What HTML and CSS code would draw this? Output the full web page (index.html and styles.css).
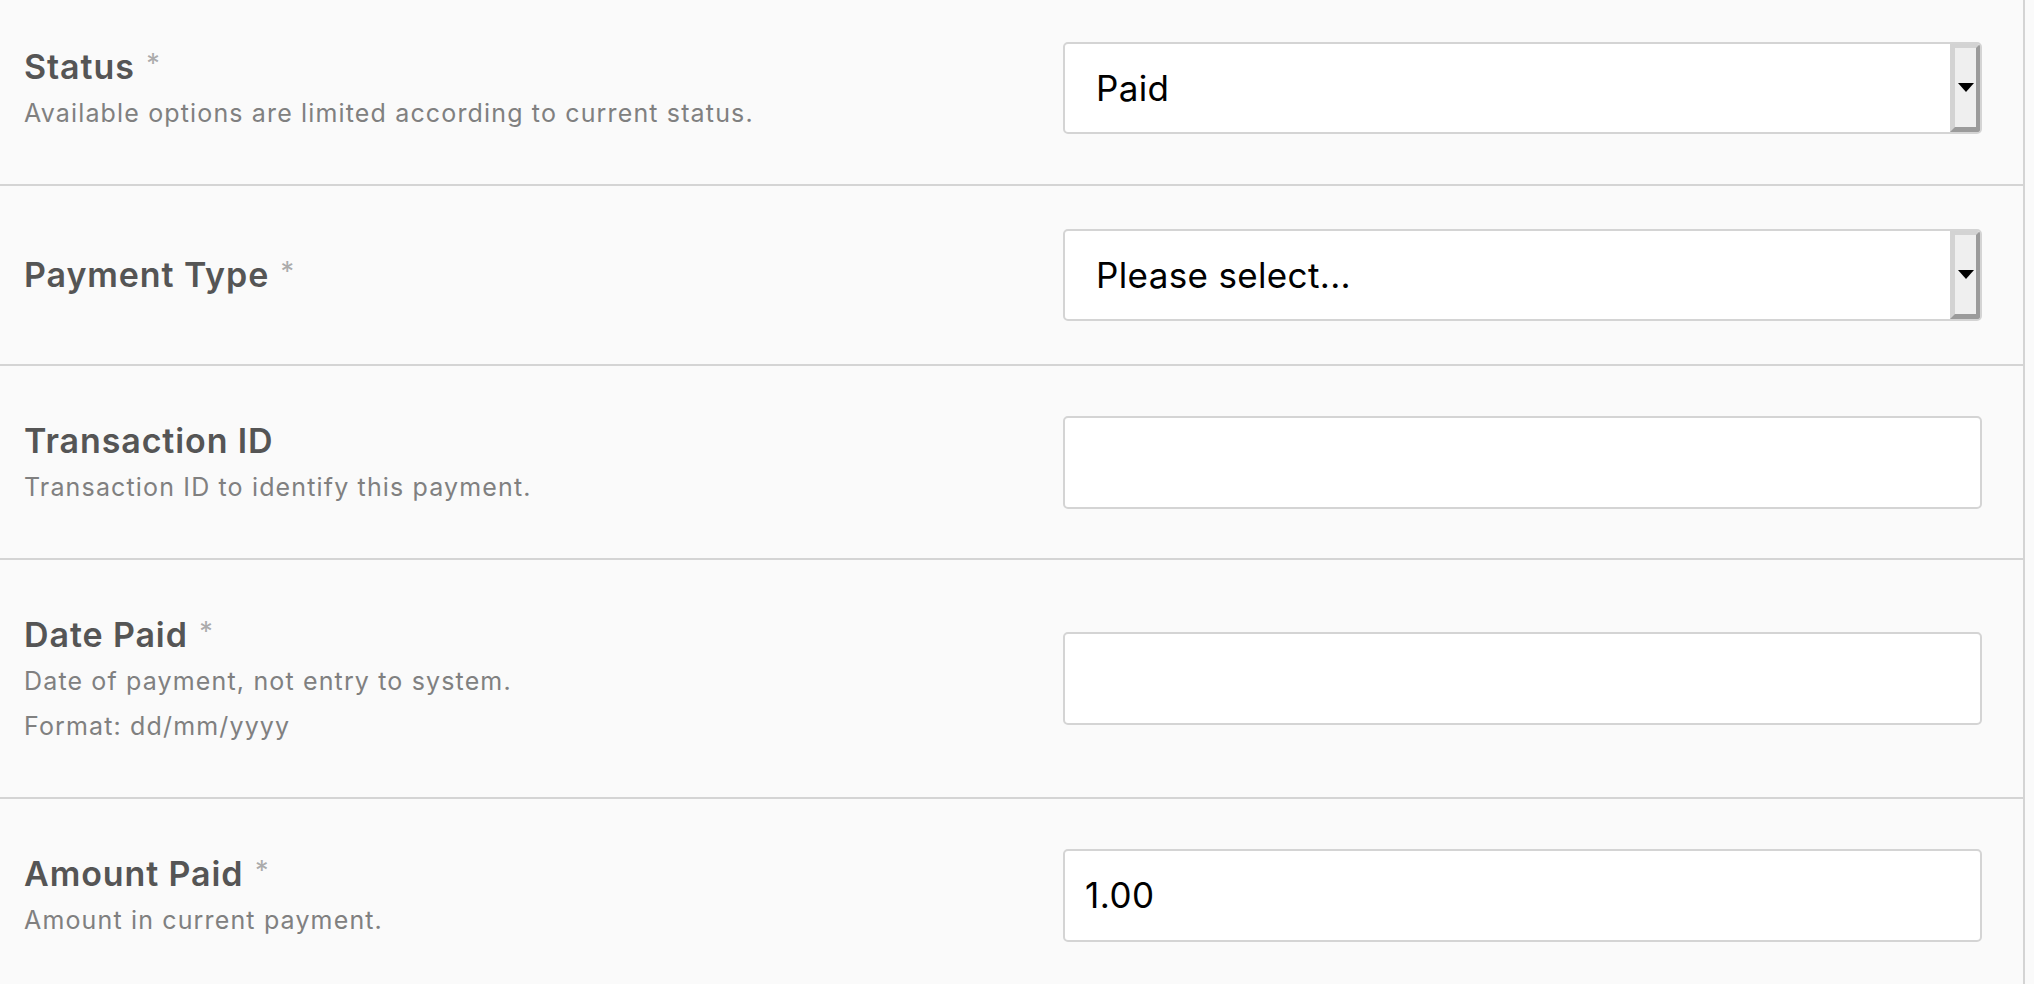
FILE: index.html
```html
<!DOCTYPE html>
<html lang="en">
<head>
<meta charset="utf-8">
<title>Payment form</title>
<link rel="stylesheet" href="styles.css">
</head>
<body>
<form class="form">
  <div class="field">
    <div class="field-info">
      <label class="field-label" for="status">Status <span class="req">*</span></label>
      <div class="field-help">Available options are limited according to current status.</div>
    </div>
    <div class="field-control">
      <div class="select-wrap">
        <select id="status" class="select"><option>Paid</option></select>
        <span class="select-btn"><span class="tri"></span></span>
      </div>
    </div>
  </div>

  <div class="field">
    <div class="field-info field-info--solo">
      <label class="field-label" for="ptype">Payment Type <span class="req">*</span></label>
    </div>
    <div class="field-control">
      <div class="select-wrap">
        <select id="ptype" class="select"><option>Please select...</option></select>
        <span class="select-btn"><span class="tri"></span></span>
      </div>
    </div>
  </div>

  <div class="field">
    <div class="field-info">
      <label class="field-label" for="txid">Transaction ID</label>
      <div class="field-help">Transaction ID to identify this payment.</div>
    </div>
    <div class="field-control">
      <input id="txid" class="input" type="text" value="">
    </div>
  </div>

  <div class="field">
    <div class="field-info">
      <label class="field-label" for="dpaid">Date Paid <span class="req">*</span></label>
      <div class="field-help">Date of payment, not entry to system.</div>
      <div class="field-help">Format: dd/mm/yyyy</div>
    </div>
    <div class="field-control">
      <input id="dpaid" class="input" type="text" value="">
    </div>
  </div>

  <div class="field">
    <div class="field-info">
      <label class="field-label" for="amount">Amount Paid <span class="req">*</span></label>
      <div class="field-help">Amount in current payment.</div>
    </div>
    <div class="field-control">
      <input id="amount" class="input" type="text" value="1.00">
    </div>
  </div>
</form>
</body>
</html>
```
FILE: styles.css
```css
* { box-sizing: border-box; }

html, body {
  margin: 0;
  padding: 0;
  background: #fafafa;
  overflow: hidden;
}

body {
  font-family: Inter, "Noto Sans", "Liberation Sans", sans-serif;
}

.form {
  width: 2025px;
  margin: -8px 0 0 0;
  border-right: 2px solid #d4d4d4;
}

.field {
  display: grid;
  grid-template-columns: 1fr 919px;
  align-items: center;
  padding: 43px 41px 43px 24px;
  border-bottom: 2px solid #d4d4d4;
  background: #fafafa;
}

.field-info {
  display: flex;
  flex-direction: column;
  padding-bottom: 5px;
}

.field-info--solo {
  padding-bottom: 0;
}

.field-label {
  display: block;
  padding-top: 8px;
  font-size: 34px;
  line-height: 48px;
  font-weight: 600;
  letter-spacing: 0.9px;
  color: #555555;
}

.field-info--solo .field-label {
  padding-top: 0;
}

.req {
  font-size: 27px;
  font-weight: 400;
  color: #ababab;
  vertical-align: top;
  position: relative;
  top: -3px;
  margin-left: 2px;
}

.field-help {
  font-size: 25px;
  line-height: 45px;
  letter-spacing: 1.15px;
  color: #808080;
}

.field-control {
  display: flex;
}

.select-wrap {
  display: flex;
  width: 100%;
  height: 92px;
  background: #ffffff;
  border: 2px solid #d4d4d4;
  border-radius: 5px;
  overflow: hidden;
}

.select {
  flex: 1;
  appearance: none;
  -webkit-appearance: none;
  border: none;
  outline: none;
  background: transparent;
  padding: 0 0 0 31px;
  margin: 0;
  font-family: Inter, "Noto Sans", "Liberation Sans", sans-serif;
  font-size: 35px;
  letter-spacing: 0.35px;
  color: #000000;
}

.select-btn {
  width: 30px;
  display: flex;
  align-items: center;
  justify-content: center;
  background: #efefef;
  border-style: solid;
  border-width: 4px 4px 5px 5px;
  border-color: #d3d3d3 #9b9b9b #9b9b9b #d3d3d3;
}

.tri {
  width: 0;
  height: 0;
  border-left: 8px solid transparent;
  border-right: 8px solid transparent;
  border-top: 9px solid #000000;
}

.input {
  width: 100%;
  height: 93px;
  background: #ffffff;
  border: 2px solid #d4d4d4;
  border-radius: 5px;
  padding: 0 0 0 20px;
  margin: 0;
  outline: none;
  font-family: Inter, "Noto Sans", "Liberation Sans", sans-serif;
  font-size: 35px;
  letter-spacing: 0.5px;
  color: #000000;
}
```
